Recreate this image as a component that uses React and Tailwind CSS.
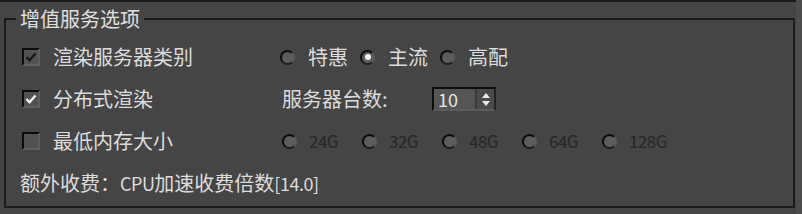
import React from "react";

function Check({ mark }) {
  return (
    <span className="w-[18px] h-[18px] shrink-0 border-2 border-t-[#0c0c0c] border-l-[#0c0c0c] border-r-[#5e5e5e] border-b-[#5e5e5e] bg-[#525252] flex items-center justify-center">
      {mark && (
        <svg width="12" height="12" viewBox="0 0 12 12">
          <path
            d="M1.5 6 L4.5 9.2 L10.5 2.5"
            stroke={mark === "light" ? "#f2f2f2" : "#161616"}
            strokeWidth="2.4"
            fill="none"
          />
        </svg>
      )}
    </span>
  );
}

function Radio({ on }) {
  return (
    <span className="w-[15px] h-[15px] shrink-0 rounded-full border-[2.5px] border-t-[#0c0c0c] border-l-[#0c0c0c] border-b-[#1e1e1e] border-r-[#5a5a5a] bg-[#5c5c5c] flex items-center justify-center">
      {on && <span className="w-[6px] h-[6px] rounded-full bg-[#f4f4f4]" />}
    </span>
  );
}

function Spin({ value }) {
  return (
    <div className="flex h-[24px] w-[64px] border-2 border-t-[#0e0e0e] border-l-[#0e0e0e] border-r-[#222222] border-b-[#5c5c5c]">
      <div className="w-[41px] bg-[#555555] text-[18px] leading-[20px] text-[#e6e6e6] pl-[4px]">{value}</div>
      <div className="w-[2px] bg-[#3a3a3a]" />
      <div className="flex-1 bg-[#4a4a4a] flex flex-col items-center justify-center gap-[3px]">
        <svg width="8" height="5" viewBox="0 0 8 5">
          <path d="M0 5 L4 0 L8 5 Z" fill="#e8e8e8" />
        </svg>
        <svg width="8" height="5" viewBox="0 0 8 5">
          <path d="M0 0 L4 5 L8 0 Z" fill="#e8e8e8" />
        </svg>
      </div>
    </div>
  );
}

export default function App() {
  const tiers = [
    { label: "特惠", on: false },
    { label: "主流", on: true },
    { label: "高配", on: false },
  ];
  const mem = ["24G", "32G", "48G", "64G", "128G"];

  return (
    <div className="w-[802px] h-[214px] bg-[#454545] flex font-['Noto_Sans_CJK_SC','Noto_Sans',sans-serif] text-[#dcdcdc]">
      <div className="w-[796px] h-full border-t-2 border-[#1a1a1a] pl-[4px] pt-[16px]">
        <div className="relative w-[791px] h-[190px] border-2 border-[#1c1c1c] pt-[16px]">
          <div className="absolute left-[10px] -top-[13px] px-[4px] bg-[#454545] text-[20px] leading-[24px] text-[#e0e0e0]">
            增值服务选项
          </div>

          <div className="flex items-center h-[42px] pl-[16px]">
            <div className="w-[258px] flex items-center gap-[13px]">
              <Check mark="dark" />
              <span className="text-[20px] leading-[24px]">渲染服务器类别</span>
            </div>
            <div className="flex items-center">
              {tiers.map((t) => (
                <div key={t.label} className="flex items-center mr-[12px]">
                  <Radio on={t.on} />
                  <span className="ml-[13px] text-[20px] leading-[24px]">{t.label}</span>
                </div>
              ))}
            </div>
          </div>

          <div className="flex items-center h-[42px] pl-[16px]">
            <div className="w-[258px] flex items-center gap-[13px]">
              <Check mark="light" />
              <span className="text-[20px] leading-[24px]">分布式渲染</span>
            </div>
            <span className="w-[152px] pl-[2px] text-[20px] leading-[24px]">服务器台数:</span>
            <Spin value="10" />
          </div>

          <div className="flex items-center h-[42px] pl-[16px]">
            <div className="w-[258px] flex items-center gap-[13px]">
              <Check />
              <span className="text-[20px] leading-[24px]">最低内存大小</span>
            </div>
            <div className="flex items-center pl-[2px]">
              {mem.map((m) => (
                <div key={m} className="w-[80px] flex items-center">
                  <Radio />
                  <span className="ml-[12px] text-[17px] leading-[24px] tracking-[-0.5px] text-[#262626]">{m}</span>
                </div>
              ))}
            </div>
          </div>

          <div className="flex items-center h-[42px] pl-[14px] text-[20px] leading-[24px]">
            <span>额外收费：</span>
            <span className="text-[18px] tracking-[-0.5px]">CPU</span>
            <span>加速收费倍数</span>
            <span className="text-[18px] tracking-[-0.5px]">[14.0]</span>
          </div>
        </div>
      </div>
      <div className="flex-1 bg-[#4c4c4c]" />
    </div>
  );
}
